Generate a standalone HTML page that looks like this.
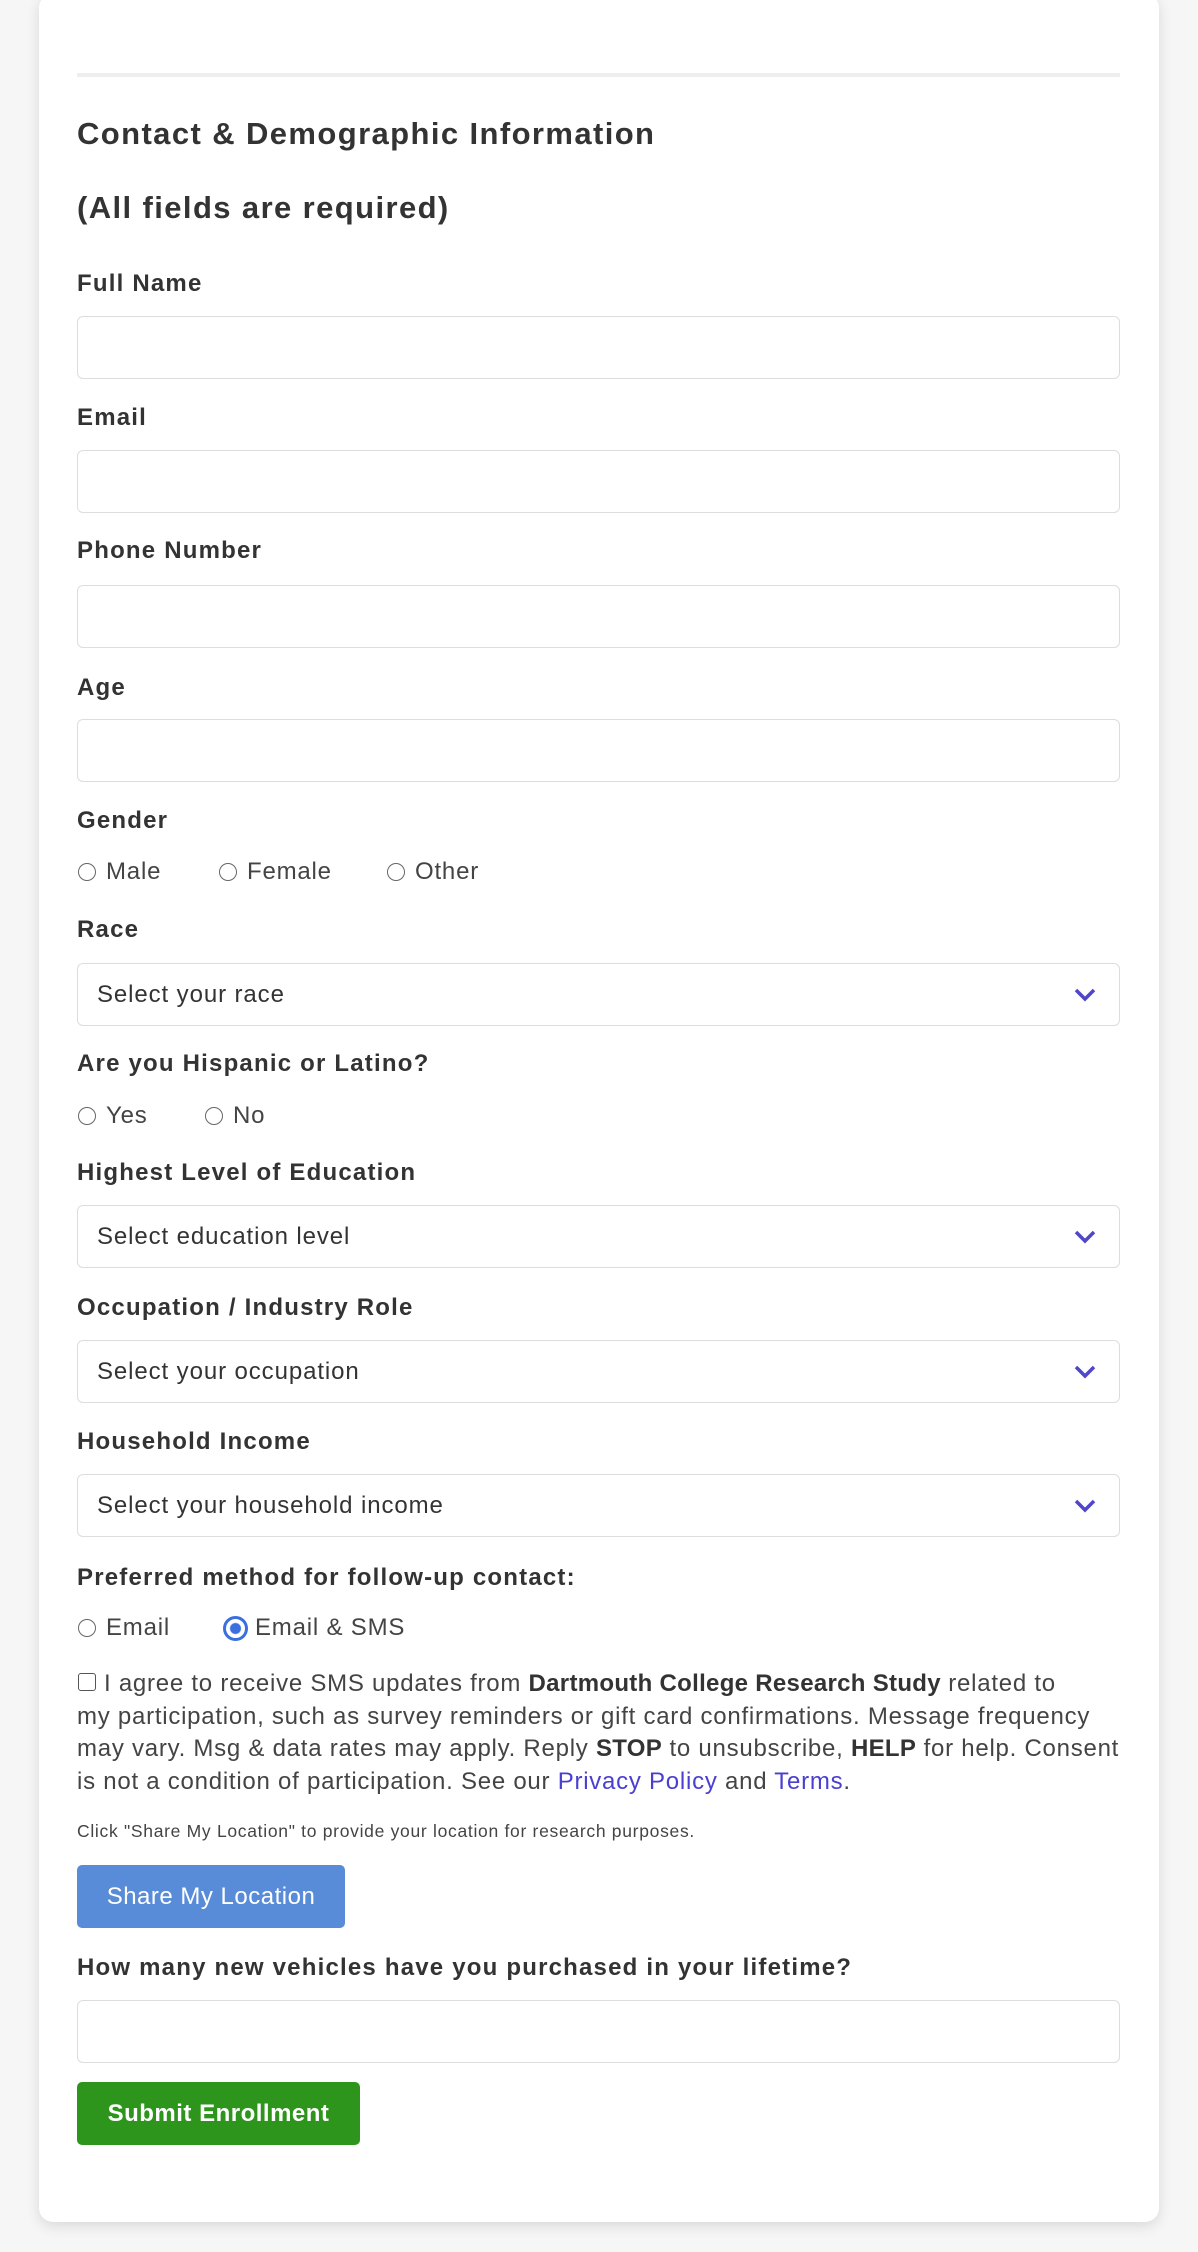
<!DOCTYPE html>
<html><head><meta charset="utf-8"><style>
*{box-sizing:border-box;margin:0;padding:0}
html,body{width:1198px;height:2252px;background:#f6f6f6;font-family:"Liberation Sans",Tahoma,sans-serif;color:#333;overflow:hidden}
.card{position:absolute;left:39px;top:-6px;width:1120px;height:2228px;background:#fff;border-radius:14px;box-shadow:0 4px 14px rgba(0,0,0,0.12)}
.a{position:absolute;white-space:nowrap}
.div{position:absolute;left:77px;width:1043px;top:73px;height:4px;background:#eee}
.h{font-weight:bold;font-size:31px;line-height:36px;letter-spacing:1.4px}
.l{font-weight:bold;font-size:24px;line-height:28px;letter-spacing:1.2px}
.in{position:absolute;left:77px;width:1043px;height:63px;border:1.5px solid #ddd;border-radius:6px;background:#fff}
.sel span{position:absolute;left:19px;top:17px;font-size:24px;line-height:28px;color:#333;letter-spacing:0.9px}
.sel svg{position:absolute;left:996px;top:24px}
.r{position:absolute;width:18px;height:18px;border:1.5px solid #666;border-radius:50%}
.t{font-size:24px;line-height:28px;color:#444;letter-spacing:0.8px}
.cb{position:absolute;left:77px;top:1668px;white-space:nowrap;font-size:24px;line-height:32.5px;color:#444;letter-spacing:0.75px}
.cb b{letter-spacing:0.3px}
a{color:#4a3fcf;text-decoration:none}
.btn{position:absolute;left:77px;border-radius:5px;color:#fff;font-size:24px;line-height:63px;text-align:center}
</style></head><body>
<div class="card"></div>
<div class="div"></div>
<div class="a h" style="left:77px;top:116px">Contact &amp; Demographic Information</div>
<div class="a h" style="left:77px;top:190px">(All fields are required)</div>

<div class="a l" style="left:77px;top:270px">Full Name</div>
<div class="in" style="top:316px"></div>
<div class="a l" style="left:77px;top:404px">Email</div>
<div class="in" style="top:450px"></div>
<div class="a l" style="left:77px;top:537px">Phone Number</div>
<div class="in" style="top:585px"></div>
<div class="a l" style="left:77px;top:674px">Age</div>
<div class="in" style="top:719px"></div>

<div class="a l" style="left:77px;top:807px">Gender</div>
<div class="r" style="left:78px;top:863px"></div><div class="a t" style="left:106px;top:858px">Male</div>
<div class="r" style="left:219px;top:863px"></div><div class="a t" style="left:247px;top:858px">Female</div>
<div class="r" style="left:387px;top:863px"></div><div class="a t" style="left:415px;top:858px">Other</div>

<div class="a l" style="left:77px;top:916px">Race</div>
<div class="in sel" style="top:963px"><span>Select your race</span><svg width="22" height="14" viewBox="0 0 22 14"><path d="M2 2 L11 11 L20 2" fill="none" stroke="#5046c8" stroke-width="3.5"/></svg></div>

<div class="a l" style="left:77px;top:1050px">Are you Hispanic or Latino?</div>
<div class="r" style="left:78px;top:1107px"></div><div class="a t" style="left:106px;top:1102px">Yes</div>
<div class="r" style="left:205px;top:1107px"></div><div class="a t" style="left:233px;top:1102px">No</div>

<div class="a l" style="left:77px;top:1159px">Highest Level of Education</div>
<div class="in sel" style="top:1205px"><span>Select education level</span><svg width="22" height="14" viewBox="0 0 22 14"><path d="M2 2 L11 11 L20 2" fill="none" stroke="#5046c8" stroke-width="3.5"/></svg></div>

<div class="a l" style="left:77px;top:1294px">Occupation / Industry Role</div>
<div class="in sel" style="top:1340px"><span>Select your occupation</span><svg width="22" height="14" viewBox="0 0 22 14"><path d="M2 2 L11 11 L20 2" fill="none" stroke="#5046c8" stroke-width="3.5"/></svg></div>

<div class="a l" style="left:77px;top:1428px">Household Income</div>
<div class="in sel" style="top:1474px"><span>Select your household income</span><svg width="22" height="14" viewBox="0 0 22 14"><path d="M2 2 L11 11 L20 2" fill="none" stroke="#5046c8" stroke-width="3.5"/></svg></div>

<div class="a l" style="left:77px;top:1564px">Preferred method for follow-up contact:</div>
<div class="r" style="left:78px;top:1619px"></div><div class="a t" style="left:106px;top:1614px">Email</div>
<div class="r" style="left:223px;top:1616px;width:25px;height:25px;border:3px solid #3b6fe0;background:radial-gradient(circle,#3b6fe0 0 5px,#fff 6px)"></div><div class="a t" style="left:255px;top:1614px">Email &amp; SMS</div>

<div style="position:absolute;left:78px;top:1673px;width:18px;height:18px;border:1.5px solid #555;border-radius:3px"></div>
<div class="cb"><span style="display:inline-block;width:27px"></span>I agree to receive SMS updates from <b style="color:#333">Dartmouth College Research Study</b> related to<br>my participation, such as survey reminders or gift card confirmations. Message frequency<br>may vary. Msg &amp; data rates may apply. Reply <b style="color:#333">STOP</b> to unsubscribe, <b style="color:#333">HELP</b> for help. Consent<br>is not a condition of participation. See our <a>Privacy Policy</a> and <a>Terms</a>.</div>

<div class="a" style="left:77px;top:1821px;font-size:17.5px;line-height:20px;color:#444;letter-spacing:0.7px">Click "Share My Location" to provide your location for research purposes.</div>
<div class="btn" style="top:1865px;width:268px;background:#588cd8;letter-spacing:0.5px">Share My Location</div>

<div class="a l" style="left:77px;top:1954px">How many new vehicles have you purchased in your lifetime?</div>
<div class="in" style="top:2000px"></div>
<div class="btn" style="top:2082px;width:283px;background:#2e951c;font-weight:bold;letter-spacing:0.5px">Submit Enrollment</div>
</body></html>
